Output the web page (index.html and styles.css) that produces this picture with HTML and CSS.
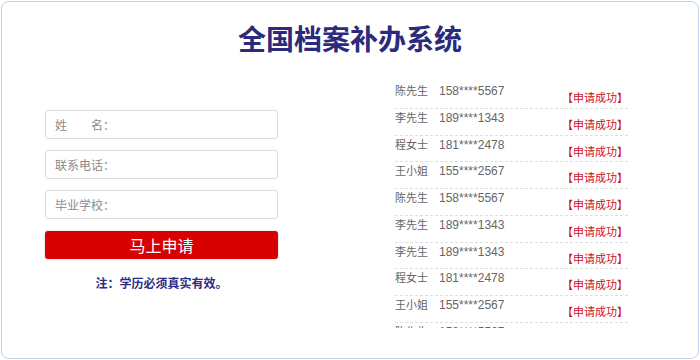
FILE: index.html
```html
<!DOCTYPE html>
<html lang="zh-CN">
<head>
<meta charset="utf-8">
<title>全国档案补办系统</title>
<link rel="stylesheet" href="styles.css">
</head>
<body>
<div class="card">
  <h1 class="title">全国档案补办系统</h1>
  <div class="columns">
    <div class="form">
      <input class="field" type="text" placeholder="姓　　名：">
      <input class="field" type="text" placeholder="联系电话：">
      <input class="field" type="text" placeholder="毕业学校：">
      <button class="submit" type="button">马上申请</button>
      <p class="note">注：学历必须真实有效。</p>
    </div>
    <div class="list">
      <ul class="rows">
        <li class="row"><span class="name">陈先生</span><span class="phone">158****5567</span><span class="status">【申请成功】</span></li>
        <li class="row"><span class="name">李先生</span><span class="phone">189****1343</span><span class="status">【申请成功】</span></li>
        <li class="row"><span class="name">程女士</span><span class="phone">181****2478</span><span class="status">【申请成功】</span></li>
        <li class="row"><span class="name">王小姐</span><span class="phone">155****2567</span><span class="status">【申请成功】</span></li>
        <li class="row"><span class="name">陈先生</span><span class="phone">158****5567</span><span class="status">【申请成功】</span></li>
        <li class="row"><span class="name">李先生</span><span class="phone">189****1343</span><span class="status">【申请成功】</span></li>
        <li class="row"><span class="name">李先生</span><span class="phone">189****1343</span><span class="status">【申请成功】</span></li>
        <li class="row"><span class="name">程女士</span><span class="phone">181****2478</span><span class="status">【申请成功】</span></li>
        <li class="row"><span class="name">王小姐</span><span class="phone">155****2567</span><span class="status">【申请成功】</span></li>
        <li class="row"><span class="name">陈先生</span><span class="phone">158****5567</span><span class="status">【申请成功】</span></li>
      </ul>
    </div>
  </div>
</div>
</body>
</html>
```
FILE: styles.css
```css
html, body {
  margin: 0;
  padding: 0;
  overflow: hidden;
  background: #ffffff;
}
body {
  font-family: "Liberation Sans", "Noto Sans CJK SC", sans-serif;
}
.card {
  box-sizing: border-box;
  margin: 1px;
  width: 698px;
  height: 358px;
  border: 1px solid #bcd3ee;
  border-radius: 8px;
  background: #fff;
}
.title {
  margin: 17px 0 0;
  font-family: "Noto Sans CJK SC", sans-serif;
  font-size: 28px;
  line-height: 38px;
  font-weight: 700;
  color: #2b2a7c;
  text-align: center;
}
.columns {
  display: flex;
  gap: 117px;
  padding-left: 43px;
  margin-top: 25px;
}
.form {
  width: 233px;
  padding-top: 28px;
  display: flex;
  flex-direction: column;
}
.field {
  box-sizing: border-box;
  height: 29px;
  margin: 0 0 11px;
  padding: 0 9px;
  border: 1px solid #dcdcdc;
  border-radius: 3px;
  font-family: "Noto Sans CJK SC", sans-serif;
  font-size: 12px;
  color: #333;
  outline: none;
}
.field::placeholder {
  color: #8a8a8a;
}
.submit {
  box-sizing: border-box;
  height: 28px;
  margin: 1px 0 0;
  border: 0;
  border-radius: 3px;
  background: #d80000;
  color: #fff;
  font-family: "Noto Sans CJK SC", sans-serif;
  font-size: 16px;
  line-height: 28px;
  padding: 0;
  box-shadow: 0 0 2px rgba(0,0,0,0.25);
}
.note {
  margin: 15px 0 0;
  text-align: center;
  font-family: "Noto Sans CJK SC", sans-serif;
  font-size: 12px;
  line-height: 18px;
  font-weight: 700;
  color: #2e2d86;
}
.list {
  width: 233px;
  height: 246px;
  overflow: hidden;
}
.rows {
  list-style: none;
  margin: 0;
  padding: 0;
}
.row {
  height: 25.75px;
  border-bottom: 1px dashed #dedede;
  font-size: 12px;
  line-height: 16px;
  color: #666;
}
.name {
  display: inline-block;
  width: 44px;
  font-family: "Noto Sans CJK SC", sans-serif;
  font-size: 11px;
}
.phone {
  font-family: "Liberation Sans", sans-serif;
}
.status {
  float: right;
  margin-top: 7px;
  font-family: "Noto Sans CJK SC", sans-serif;
  font-size: 11px;
  color: #cc1020;
}
```
